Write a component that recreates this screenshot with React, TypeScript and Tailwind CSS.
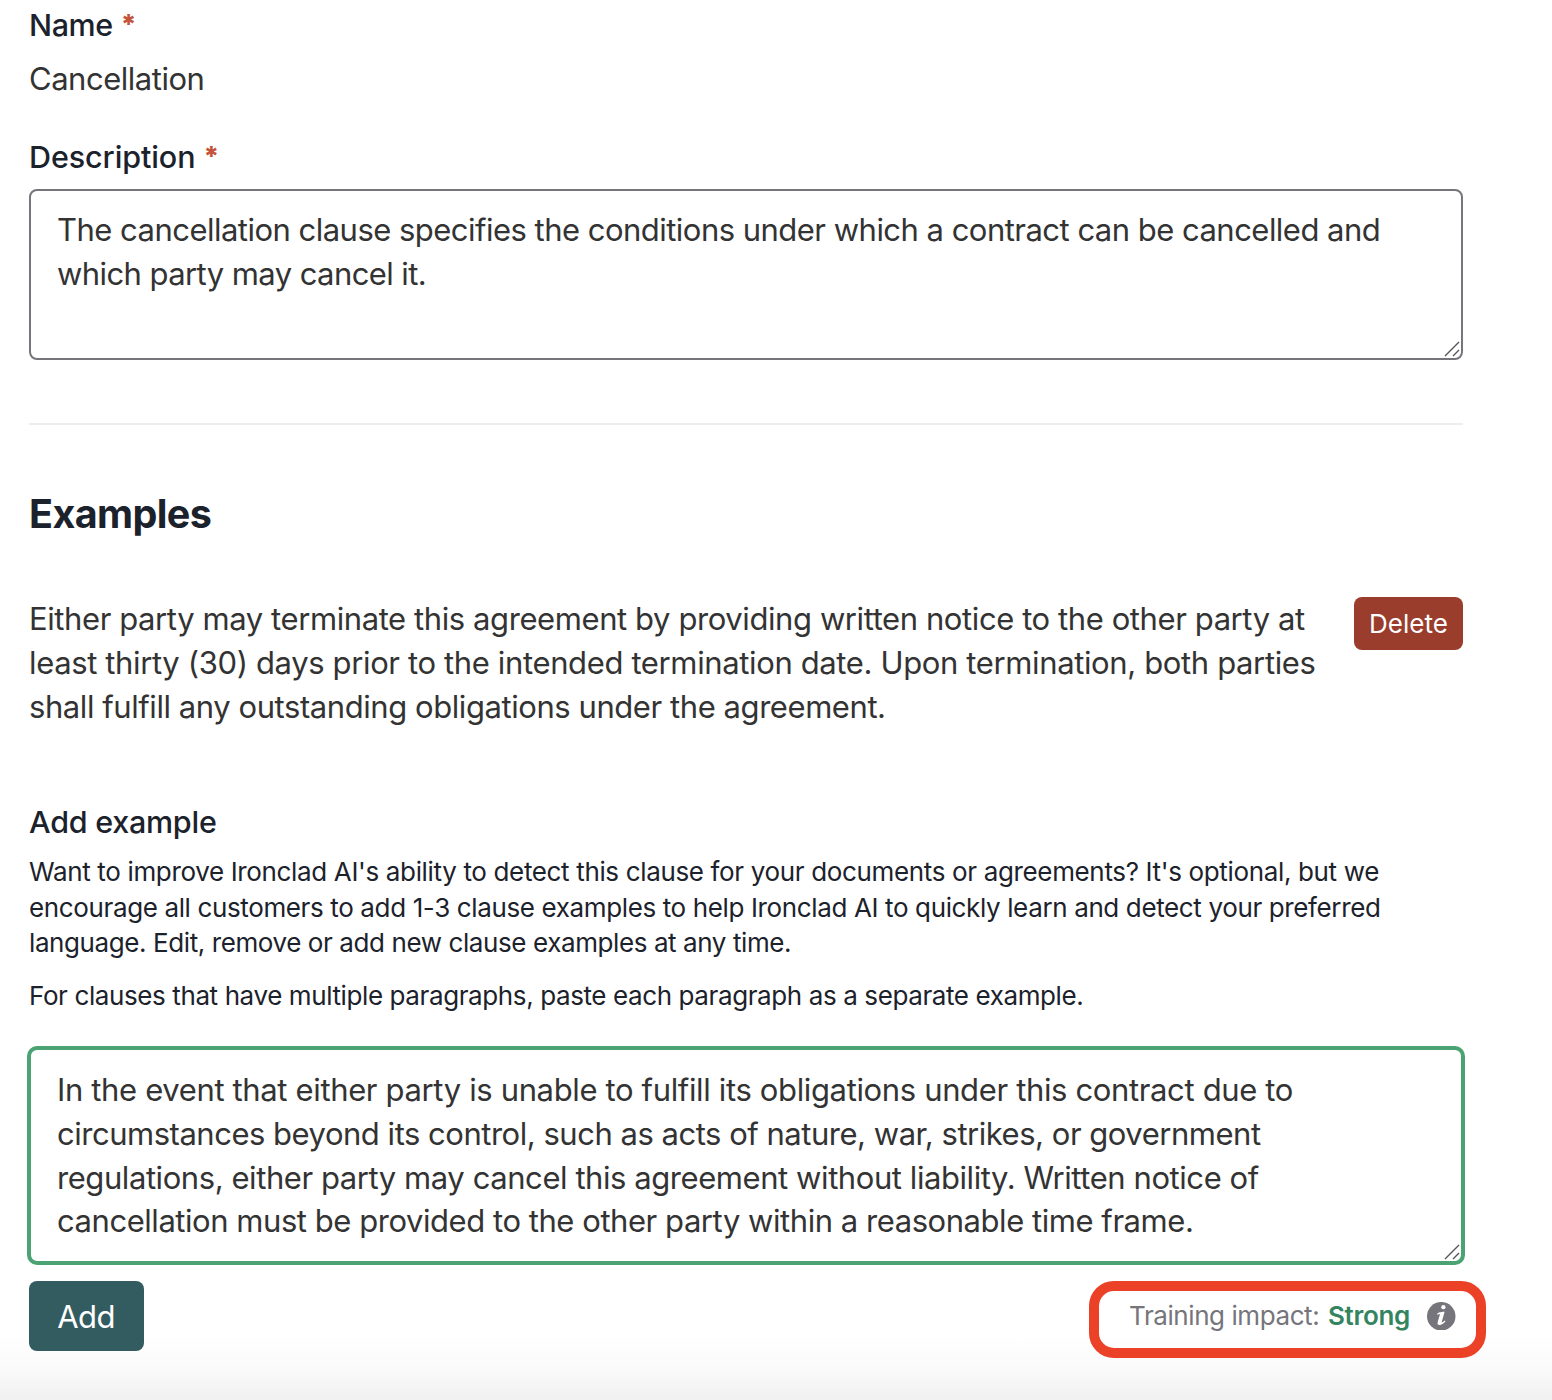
import clsx from 'clsx'

interface Line {
    text: string
    className?: string
}

const descriptionLines: Line[] = [
    { text: 'The cancellation clause specifies the conditions under which a contract can be cancelled and', className: 'tracking-[-0.52px]' },
    { text: 'which party may cancel it.', className: 'tracking-[-0.58px]' },
]

const exampleLines: Line[] = [
    { text: 'Either party may terminate this agreement by providing written notice to the other party at', className: 'tracking-[-0.41px]' },
    { text: 'least thirty (30) days prior to the intended termination date. Upon termination, both parties', className: 'tracking-[-0.366px]' },
    { text: 'shall fulfill any outstanding obligations under the agreement.', className: 'tracking-[-0.43px]' },
]

const helpLines: Line[] = [
    { text: "Want to improve Ironclad AI's ability to detect this clause for your documents or agreements? It's optional, but we", className: 'tracking-[-0.348px]' },
    { text: 'encourage all customers to add 1-3 clause examples to help Ironclad AI to quickly learn and detect your preferred', className: 'tracking-[-0.37px]' },
    { text: 'language. Edit, remove or add new clause examples at any time.', className: 'tracking-[-0.405px]' },
]

const draftLines: Line[] = [
    { text: 'In the event that either party is unable to fulfill its obligations under this contract due to', className: 'tracking-[-0.355px]' },
    { text: 'circumstances beyond its control, such as acts of nature, war, strikes, or government', className: 'tracking-[-0.48px]' },
    { text: 'regulations, either party may cancel this agreement without liability. Written notice of', className: 'tracking-[-0.43px]' },
    { text: 'cancellation must be provided to the other party within a reasonable time frame.', className: 'tracking-[-0.45px]' },
]

function Lines({ lines }: { lines: Line[] }) {
    return (
        <>
            {lines.map((line) => (
                <span key={line.text} className={clsx('block whitespace-nowrap', line.className)}>
                    {line.text}
                </span>
            ))}
        </>
    )
}

function FieldLabel({ children, className }: { children: string; className?: string }) {
    return (
        <div className="flex gap-2 text-[30.5px] leading-[44px] font-medium text-[#1c222b]">
            <span className={className}>{children}</span>
            <span className="text-[27px] leading-[44px] font-extrabold text-[#c4553b]">*</span>
        </div>
    )
}

function ResizeGrip() {
    return (
        <svg viewBox="0 0 16 16" className="absolute right-px bottom-px h-4 w-4" stroke="#555" strokeWidth="1.4" fill="none">
            <path d="M1 15 15 1M9 15l6-6" />
        </svg>
    )
}

function InfoIcon() {
    return (
        <svg viewBox="0 0 16 16" className="mt-px h-[28.5px] w-[28.5px]">
            <circle cx="8" cy="8" r="8" fill="#75757b" />
            <circle cx="9.2" cy="2.9" r="1.2" fill="#fff" />
            <path d="M5.6 6.7C6.4 5.9 7.4 5.6 9.9 5.5L8.3 11.1C8.2 11.7 8.6 11.6 10 10.4L10.4 10.8C9.2 12.2 8.2 12.9 7 12.9C6 12.9 5.7 12.2 6 11.2L7.2 7.2C7.4 6.6 7 6.6 5.8 7.1Z" fill="#fff" />
        </svg>
    )
}

export default function App() {
    return (
        <div className="flex h-[1400px] w-[1552px] flex-col overflow-hidden bg-[linear-gradient(to_bottom,#fff_1335px,#fafafa_1370px,#f0f0f0_1400px)] pt-[3px] pl-[29px] font-['Inter',sans-serif] text-[#333]">
            <div className="w-[1434px]">
                <FieldLabel className="tracking-[-0.4px]">Name</FieldLabel>
                <p className="mt-[10px] text-[31px] leading-[44px] tracking-[-0.48px]">Cancellation</p>

                <div className="mt-[34px]">
                    <FieldLabel className="tracking-[-0.1px]">Description</FieldLabel>
                </div>
                <div className="relative mt-[10px] h-[171px] rounded-lg border-2 border-[#75757b] bg-white px-[26px] pt-[17px] text-[31px] leading-[44px]">
                    <Lines lines={descriptionLines} />
                    <ResizeGrip />
                </div>

                <hr className="mt-[63px] border-t-2 border-[#ededed]" />

                <h2 className="mt-[65px] text-[39.5px] leading-[48px] font-bold tracking-[-0.6px] text-[#1c222b]">Examples</h2>
                <div className="mt-[59px] flex items-start justify-between">
                    <p className="text-[31px] leading-[44px]">
                        <Lines lines={exampleLines} />
                    </p>
                    <button className="h-[53px] w-[109px] shrink-0 rounded-lg bg-[#9a3d2c] text-[26px] text-white">Delete</button>
                </div>

                {/* Add example */}
                <h3 className="mt-[71px] text-[30.5px] leading-[44px] font-medium tracking-[-0.25px] text-[#1c222b]">Add example</h3>
                <div className="mt-[10px] text-[26px] leading-[35.5px] text-[#1c222b]">
                    <p>
                        <Lines lines={helpLines} />
                    </p>
                    <p className="mt-[17.5px] tracking-[-0.395px]">For clauses that have multiple paragraphs, paste each paragraph as a separate example.</p>
                </div>
                <div className="relative -mx-0.5 mt-[32.5px] h-[219px] rounded-[10px] border-4 border-[#4ba374] bg-white px-[26px] pt-[18px] text-[31px] leading-[43.8px]">
                    <Lines lines={draftLines} />
                    <ResizeGrip />
                </div>

                <div className="mt-4 -mr-[23px] flex items-start justify-between">
                    <button className="h-[70px] w-[115px] rounded-lg bg-[#335c61] pt-0.5 pr-px text-[31px] tracking-[-0.6px] text-white">Add</button>
                    <div className="flex h-[77px] w-[397px] items-center rounded-[25px] border-10 border-[#eb4127] pb-2 pl-[30px] text-[26px] whitespace-nowrap">
                        <span className="w-[199px] tracking-[-0.42px] text-[#75757b]">Training impact:</span>
                        <span className="w-[99px] font-semibold tracking-[-0.3px] text-[#358460]">Strong</span>
                        <InfoIcon />
                    </div>
                </div>
            </div>
        </div>
    )
}
